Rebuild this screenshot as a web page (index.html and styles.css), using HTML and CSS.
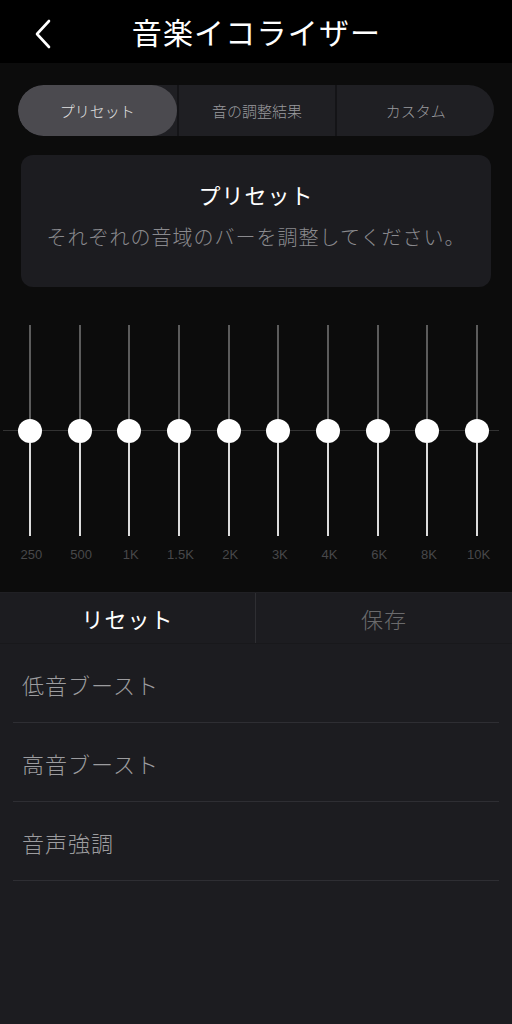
FILE: index.html
```html
<html>
<head>
    <meta http-equiv="Content-Type" content="text/html; charset=UTF-8" />
    <title>音楽イコライザー</title>
    <link rel="stylesheet" href="styles.css">
</head>
<body>

<!-- HEADER -->
<div class="topBar">
    <div class="backBtn">
        <svg width="20" height="30" viewBox="0 0 20 30">
            <polyline points="15,2 3,15 15,28" fill="none" stroke="#fff" stroke-width="2.6" stroke-linecap="round" stroke-linejoin="round"/>
        </svg>
    </div>
    <div class="title">音楽イコライザー</div>
    <div></div>
</div>

<div class="eqPanel">

    <!-- TABS -->
    <div class="segments">
        <div class="seg selected">プリセット</div>
        <div class="seg">音の調整結果</div>
        <div class="seg">カスタム</div>
    </div>

    <!-- INFO CARD -->
    <div class="infoCard">
        <div class="cardTitle">プリセット</div>
        <div class="cardText">それぞれの音域のバーを調整してください。</div>
    </div>

    <!-- SLIDERS -->
    <div class="bands">
        <div class="band"><div class="track"><div class="upper"></div><div class="knob"></div><div class="lower"></div></div><span>250</span></div>
        <div class="band"><div class="track"><div class="upper"></div><div class="knob"></div><div class="lower"></div></div><span>500</span></div>
        <div class="band"><div class="track"><div class="upper"></div><div class="knob"></div><div class="lower"></div></div><span>1K</span></div>
        <div class="band"><div class="track"><div class="upper"></div><div class="knob"></div><div class="lower"></div></div><span>1.5K</span></div>
        <div class="band"><div class="track"><div class="upper"></div><div class="knob"></div><div class="lower"></div></div><span>2K</span></div>
        <div class="band"><div class="track"><div class="upper"></div><div class="knob"></div><div class="lower"></div></div><span>3K</span></div>
        <div class="band"><div class="track"><div class="upper"></div><div class="knob"></div><div class="lower"></div></div><span>4K</span></div>
        <div class="band"><div class="track"><div class="upper"></div><div class="knob"></div><div class="lower"></div></div><span>6K</span></div>
        <div class="band"><div class="track"><div class="upper"></div><div class="knob"></div><div class="lower"></div></div><span>8K</span></div>
        <div class="band"><div class="track"><div class="upper"></div><div class="knob"></div><div class="lower"></div></div><span>10K</span></div>
    </div>

</div>

<!-- PRESETS -->
<div class="presetPanel">
    <div class="actions">
        <div class="act reset">リセット</div>
        <div class="act save">保存</div>
    </div>
    <ul class="presetList">
        <li>低音ブースト</li>
        <li>高音ブースト</li>
        <li>音声強調</li>
    </ul>
</div>

</body>
</html>
```

FILE: styles.css
```css
html {
    width: 100%;
    height: 100%;
}

body {
    margin: 0;
    width: 512px;
    height: 1024px;
    font-family: "Noto Sans CJK JP", "Noto Sans", sans-serif;
    font-weight: 300;
    background: #1c1c20;
    color: #fff;
    overflow: hidden;
}

/* header */
.topBar {
    height: 63px;
    background: #000;
    display: grid;
    grid-template-columns: 1fr auto 1fr;
    align-items: center;
}

.backBtn {
    padding-left: 34px;
    padding-top: 4px;
}

.title {
    font-size: 30px;
    font-weight: 400;
    line-height: 63px;
    letter-spacing: 1.2px;
    padding-left: 1px;
}

/* top dark part */
.eqPanel {
    background: #0c0c0c;
    padding-top: 22px;
    height: 507px;
}

.segments {
    margin: 0 18px;
    height: 51px;
    border-radius: 26px;
    background: #1f1f23;
    display: grid;
    grid-template-columns: 1fr 1fr 1fr;
    overflow: hidden;
}

.seg {
    display: flex;
    align-items: center;
    justify-content: center;
    font-size: 15px;
    color: #9a9a9e;
}

.seg + .seg {
    border-left: 2px solid #141417;
}

.seg.selected {
    background: #4b4a4f;
    color: #e2e2e2;
    border-radius: 26px;
}

.infoCard {
    margin: 19px 21px 0 21px;
    height: 132px;
    background: #1c1c20;
    border-radius: 12px;
    text-align: center;
    box-sizing: border-box;
    padding-top: 22px;
}

.cardTitle {
    font-size: 22px;
    font-weight: 400;
    line-height: 34px;
    letter-spacing: 1px;
    color: #fff;
}

.cardText {
    font-size: 20px;
    line-height: 30px;
    margin-top: 11px;
    letter-spacing: 1px;
    color: #8a8a8e;
}

/* sliders */
.bands {
    margin-top: 38px;
    padding: 0 10px 0 5px;
    display: grid;
    grid-template-columns: repeat(10, 1fr);
    background: linear-gradient(#333, #333) no-repeat 3px 105px / 496px 1px;
}

.band {
    display: flex;
    flex-direction: column;
    align-items: center;
}

.track {
    height: 211px;
    display: flex;
    flex-direction: column;
    align-items: center;
}

.upper {
    width: 2px;
    height: 94px;
    background: #5c5c5c;
}

.lower {
    width: 2px;
    flex: 1;
    background: #dcdcdc;
}

.knob {
    width: 24px;
    height: 24px;
    border-radius: 50%;
    background: #fff;
}

.band span {
    margin-top: 11px;
    font-family: "Liberation Sans", Arial, sans-serif;
    font-size: 13px;
    color: #48484a;
    padding-left: 3px;
}

/* bottom part */
.presetPanel {
    background: #1c1c20;
}

.actions {
    display: grid;
    grid-template-columns: 1fr 1fr;
    height: 50px;
    border-top: 1px solid #202024;
    border-bottom: 1px solid #18181b;
}

.act {
    display: flex;
    align-items: center;
    justify-content: center;
    font-size: 22px;
    letter-spacing: 1px;
}

.act.reset {
    color: #fff;
    font-weight: 400;
    border-right: 1px solid #2e2e32;
}

.act.save {
    color: #6a6a6c;
}

.presetList {
    list-style: none;
    margin: 0 13px 0 13px;
    padding: 0;
}

.presetList li {
    border-bottom: 1px solid #2e2e33;
    display: flex;
    align-items: center;
    padding-left: 9px;
    padding-top: 1px;
    box-sizing: border-box;
    height: 79px;
    font-size: 22px;
    letter-spacing: 1px;
    color: #9c9c9f;
}
```
